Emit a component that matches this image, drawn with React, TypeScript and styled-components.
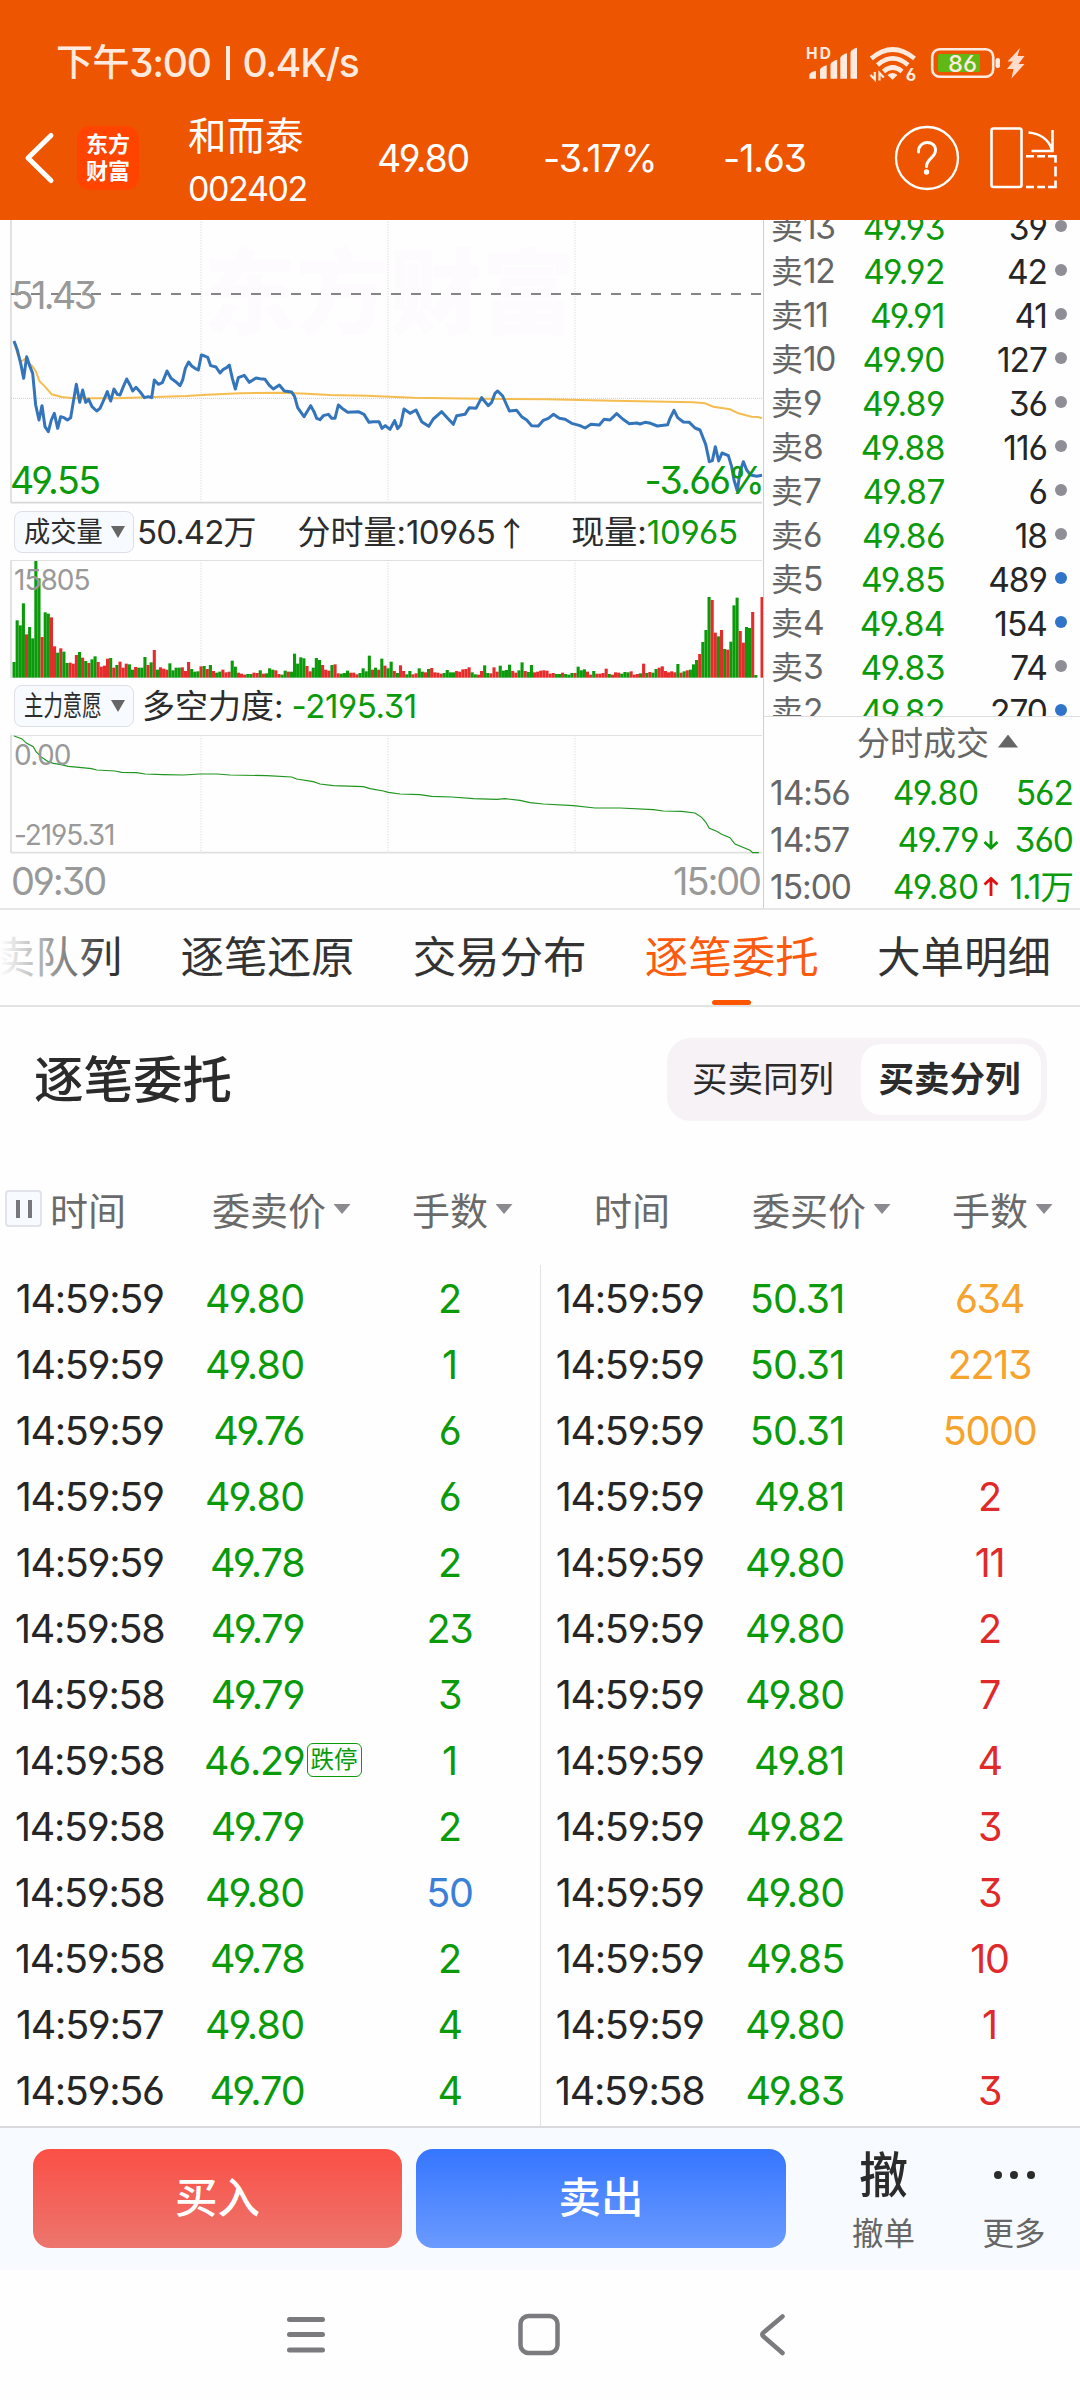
import React from "react";
import styled, { createGlobalStyle } from "styled-components";

const GREEN = "#0a9a0a";
const RED = "#e02a2a";
const ORANGE = "#f5a32c";
const BLUE = "#3a80d8";

const Global = createGlobalStyle`
  * { box-sizing: border-box; }
  body {
    margin: 0;
    background: #fefefe;
    font-family: Inter, "Noto Sans CJK SC", sans-serif;
    font-feature-settings: "cv03", "cv04", "cv09";
    color: #262626;
  }
`;

const Screen = styled.div`
  width: 1080px;
  height: 2400px;
  display: flex;
  flex-direction: column;
  overflow: hidden;
  white-space: nowrap;
  background: #fefefe;
`;

/* ---------- status bar and title bar ---------- */
const Header = styled.header`
  height: 220px;
  flex: none;
  background: #ee5500;
  color: #fff;
`;
const StatusBar = styled.div`
  height: 98px;
  padding: 28px 54px 0 56px;
  display: flex;
  justify-content: space-between;
  align-items: center;
  color: #ffeadf;
`;
const Clock = styled.div`
  display: flex;
  align-items: center;
  font-size: 39px;
  font-weight: 500;
  line-height: 70px;
  letter-spacing: -1.3px;
`;
const ClockPrefix = styled.span`
  font-size: 37px;
  letter-spacing: -0.5px;
`;
const ClockBar = styled.i`
  width: 4px;
  height: 34px;
  margin: 0 13px 0 15px;
  background: #ffeadf;
`;
const TitleBar = styled.div`
  height: 120px;
  display: flex;
  align-items: center;
  line-height: 1;
`;
const BackSlot = styled.div`
  width: 77px;
  padding-left: 23px;
  display: flex;
`;
const Logo = styled.div`
  width: 62px;
  height: 64px;
  border-radius: 13px;
  background: #ff4400;
  display: flex;
  flex-direction: column;
  align-items: center;
  justify-content: center;
  font-size: 22px;
  line-height: 27.5px;
  font-weight: 700;
`;
const StockName = styled.div`
  width: 238px;
  padding: 10px 0 0 49px;
  display: flex;
  flex-direction: column;
`;
const NameText = styled.div`
  font-size: 38.5px;
  line-height: 52px;
`;
const CodeText = styled.div`
  font-size: 34px;
  line-height: 54px;
  letter-spacing: -1.4px;
`;
const Quote = styled.div<{ $w: number }>`
  width: ${(p) => p.$w}px;
  padding-top: 2px;
  font-size: 37.5px;
  letter-spacing: -1.1px;
`;
const HeaderIcons = styled.div`
  display: flex;
  align-items: center;
  gap: 29px;
`;

/* ---------- market panel ---------- */
const Market = styled.section`
  height: 690px;
  flex: none;
  display: flex;
  border-bottom: 2px solid #e6e6e6;
`;
const Charts = styled.div`
  width: 763px;
  display: flex;
  flex-direction: column;
`;
const ChartBox = styled.div<{ $h: number }>`
  position: relative;
  height: ${(p) => p.$h}px;
  svg { display: block; position: relative; }
`;
const ChartLabel = styled.div<{ $x: number; $y: number; $size: number; $ls?: number; $green?: boolean; $right?: boolean }>`
  position: absolute;
  top: ${(p) => p.$y}px;
  ${(p) => (p.$right ? `right: ${p.$x}px;` : `left: ${p.$x}px;`)}
  font-size: ${(p) => p.$size}px;
  line-height: 1;
  letter-spacing: ${(p) => p.$ls ?? -1.2}px;
  color: ${(p) => (p.$green ? GREEN : "#999")};
`;
const Watermark = styled.div`
  position: absolute;
  left: 203px;
  top: 27px;
  font-size: 93px;
  line-height: 93px;
  font-weight: 900;
  color: #fefbfe;
`;
const IndicatorRow = styled.div<{ $h: number; $top: number }>`
  height: ${(p) => p.$h}px;
  padding: ${(p) => p.$top}px 0 0 14px;
  display: flex;
  align-items: flex-start;
  font-size: 33px;
  line-height: 42px;
  color: #2c2c2c;
`;
const Picker = styled.div`
  width: 120px;
  height: 42px;
  flex: none;
  padding: 0 8px 0 9px;
  display: flex;
  align-items: center;
  justify-content: space-between;
  border: 1px solid #dcdfe6;
  border-radius: 8px;
  background: #f7faff;
`;
const PickerText = styled.div<{ $size: number; $scale: number }>`
  width: 78px;
  font-size: ${(p) => p.$size}px;
  line-height: 40px;
  transform: scaleX(${(p) => p.$scale});
  transform-origin: left center;
`;
const Tri = styled.i<{ $w: number; $h: number; $color: string; $up?: boolean }>`
  display: block;
  flex: none;
  width: ${(p) => p.$w}px;
  height: ${(p) => p.$h}px;
  background: ${(p) => p.$color};
  clip-path: ${(p) => (p.$up ? "polygon(50% 0, 100% 100%, 0 100%)" : "polygon(0 0, 100% 0, 50% 100%)")};
`;
const Stat = styled.div<{ $ml: number; $ls?: number; $green?: boolean }>`
  margin-left: ${(p) => p.$ml}px;
  display: flex;
  letter-spacing: ${(p) => p.$ls ?? -0.9}px;
  color: ${(p) => (p.$green ? GREEN : "inherit")};
`;
const Cjk = styled.span`
  letter-spacing: 0;
`;
const UpArrow = styled.span`
  font-family: "Noto Sans CJK SC", sans-serif;
  letter-spacing: 0;
`;
const AxisRow = styled.div`
  flex: 1;
  padding: 5px 3px 0 11px;
  display: flex;
  justify-content: space-between;
  font-size: 38px;
  line-height: 44px;
  letter-spacing: -2.1px;
  color: #999;
`;

const Book = styled.aside`
  width: 317px;
  border-left: 1px solid #cfcfcf;
  display: flex;
  flex-direction: column;
`;
const AskList = styled.div`
  height: 497px;
  flex: none;
  overflow: hidden;
  border-bottom: 1px solid #dedede;
  display: flex;
  flex-direction: column;
`;
const AskInner = styled.div`
  margin-top: -15px;
`;
const AskRow = styled.div`
  height: 44px;
  padding-left: 7px;
  display: grid;
  grid-template-columns: 79px 95px 102px 28.5px;
  align-items: center;
  font-size: 33.5px;
  line-height: 44px;
  letter-spacing: -1.4px;
`;
const AskLabel = styled.div`
  color: #666;
  span { font-size: 32px; letter-spacing: 0; }
`;
const RightCell = styled.div<{ $green?: boolean; $ls?: number }>`
  text-align: right;
  color: ${(p) => (p.$green ? GREEN : "#262626")};
  ${(p) => (p.$ls !== undefined ? `letter-spacing: ${p.$ls}px;` : "")}
`;
const Dot = styled.i<{ $blue?: boolean }>`
  display: block;
  justify-self: center;
  width: 12px;
  height: 12px;
  margin-top: -4px;
  border-radius: 50%;
  background: ${(p) => (p.$blue ? "#2f74c8" : "#8f8d95")};
`;
const TradesTitle = styled.div`
  height: 53px;
  flex: none;
  padding-left: 93px;
  display: flex;
  align-items: center;
  gap: 9px;
  font-size: 33px;
  line-height: 53px;
  color: #666;
`;
const TitleTri = styled(Tri)`
  margin-top: -5px;
`;
const TradeRow = styled.div`
  height: 46.8px;
  flex: none;
  padding-left: 6px;
  display: grid;
  grid-template-columns: 96px 113px 20px 74px;
  align-items: center;
  font-size: 33.5px;
  letter-spacing: -1px;
  line-height: 46px;
`;
const TradeTime = styled.div`
  color: #666;
`;

/* ---------- tabs ---------- */
const Tabs = styled.nav`
  position: relative;
  height: 97px;
  flex: none;
  display: flex;
  justify-content: flex-end;
  gap: 58.2px;
  padding-right: 29px;
  border-bottom: 2px solid #e3e3e3;
`;
const Tab = styled.div<{ $active?: boolean }>`
  display: flex;
  flex-direction: column;
  align-items: center;
  padding-top: 4px;
  font-size: 43.5px;
  line-height: 86px;
  color: ${(p) => (p.$active ? "#fc5a0c" : "#333")};
  &::after {
    content: "";
    width: 39px;
    height: 6px;
    border-radius: 3px;
    background: ${(p) => (p.$active ? "#ff5500" : "transparent")};
  }
`;
const TabFade = styled.div`
  position: absolute;
  left: 0;
  top: 10px;
  width: 110px;
  height: 76px;
  background: linear-gradient(90deg, #fefefe 0%, rgba(254, 254, 254, 0) 100%);
`;

/* ---------- order list ---------- */
const SectionHead = styled.div`
  height: 145px;
  flex: none;
  padding: 0 33px 0 34px;
  display: flex;
  align-items: center;
  justify-content: space-between;
`;
const SectionTitle = styled.h2`
  margin: 0;
  font-size: 49.5px;
  line-height: 60px;
  font-weight: 500;
  color: #2b2b2b;
`;
const Segmented = styled.div`
  width: 380px;
  height: 83px;
  padding: 6px;
  display: flex;
  border-radius: 24px;
  background: #f6f2f6;
`;
const Segment = styled.div<{ $on?: boolean }>`
  width: ${(p) => (p.$on ? 180 : 188)}px;
  padding-right: ${(p) => (p.$on ? 3 : 8)}px;
  display: flex;
  align-items: center;
  justify-content: center;
  font-size: 35.5px;
  line-height: 70px;
  border-radius: 20px;
  color: #2b2b2b;
  background: ${(p) => (p.$on ? "#fefefe" : "transparent")};
  font-weight: ${(p) => (p.$on ? 600 : 400)};
`;
const Columns = styled.div`
  height: 113px;
  flex: none;
  padding-top: 4px;
  display: grid;
  grid-template-columns: 1fr 1fr;
`;
const ColumnSet = styled.div`
  display: grid;
  grid-template-columns: 50px 162px 200px 1fr;
  align-items: center;
  font-size: 38px;
  line-height: 50px;
  color: #6a6a6a;
`;
const ColName = styled.div<{ $shift?: number }>`
  padding-left: ${(p) => p.$shift ?? 0}px;
  display: flex;
  align-items: center;
  gap: 7.5px;
`;
const PauseBox = styled.div`
  width: 37px;
  height: 37px;
  margin: 0 0 4px 5px;
  display: flex;
  align-items: center;
  justify-content: center;
  gap: 8px;
  border: 2px solid #e0e3ea;
  border-radius: 4px;
  background: #f7faff;
  i { width: 4px; height: 18px; background: #77777c; }
`;
const SortMark = styled(Tri)`
  margin-top: -3px;
`;
const Orders = styled.div`
  height: 861px;
  flex: none;
  display: grid;
  grid-template-columns: 1fr 1fr;
`;
const OrderSide = styled.div<{ $second?: boolean }>`
  padding-top: 1px;
  box-shadow: ${(p) => (p.$second ? "inset 1px 0 #e3e3e3" : "none")};
`;
const OrderRow = styled.div`
  height: 66px;
  display: grid;
  grid-template-columns: 179.5px 125px 58px 174px;
  align-items: center;
  font-size: 39.5px;
  line-height: 66px;
  letter-spacing: -1.3px;
`;
const TimeCell = styled.div`
  text-align: center;
`;
const LimitTag = styled.span`
  width: 55px;
  height: 34px;
  margin: 0 0 2px 2px;
  display: flex;
  align-items: center;
  justify-content: center;
  border: 1px solid ${GREEN};
  border-radius: 6px;
  font-size: 23.5px;
  line-height: 30px;
  letter-spacing: 0;
  color: ${GREEN};
`;
const QtyCell = styled.div<{ $color: string }>`
  text-align: center;
  color: ${(p) => p.$color};
`;

/* ---------- bottom bars ---------- */
const ActionBar = styled.div`
  height: 144px;
  flex: none;
  padding: 21px 0 0 33px;
  display: flex;
  align-items: flex-start;
  border-top: 2px solid #d8dade;
  background: #f7faff;
`;
const TradeButton = styled.button<{ $sell?: boolean }>`
  width: ${(p) => (p.$sell ? 370 : 369)}px;
  height: 99px;
  margin: 0 14px 0 0;
  padding: 0 0 1px;
  border: 0;
  border-radius: 17px;
  font: 500 42.5px/60px Inter, "Noto Sans CJK SC", sans-serif;
  color: #fff;
  background: ${(p) =>
    p.$sell ? "linear-gradient(#3576ff, #6b9aff)" : "linear-gradient(#fb5046, #ec756d)"};
`;
const Tool = styled.div<{ $ml: number }>`
  width: 100px;
  margin-left: ${(p) => p.$ml}px;
  display: flex;
  flex-direction: column;
  align-items: center;
  color: #2b2b2b;
`;
const ToolIcon = styled.div`
  height: 54px;
  display: flex;
  align-items: center;
  gap: 8.5px;
  font-size: 49px;
  line-height: 48px;
  font-weight: 500;
  i { width: 8px; height: 8px; margin-top: -3px; border-radius: 50%; background: #2b2b2b; }
`;
const ToolLabel = styled.div`
  font-size: 31.5px;
  line-height: 62px;
  color: #666;
`;
const NavBar = styled.div`
  height: 130px;
  flex: none;
  padding: 40px 294px 0 283px;
  display: flex;
  align-items: flex-start;
`;
const NavItem = styled.div<{ $w: number }>`
  width: ${(p) => p.$w}px;
`;

/* ---------- data ---------- */
const PRICE_LINE =
  "42,378 52,405 62,445 71,490 80,425 90,455 98,475 107,570 117,615 126,572 135,635 145,650 154,615 163,595 173,640 182,605 192,608 202,615 212,608 220,560 229,508 239,562 248,525 257,562 266,553 276,575 290,588 300,580 310,558 322,530 332,558 342,522 352,538 360,540 370,515 380,492 390,510 398,528 408,517 420,530 433,548 445,545 455,548 463,495 475,508 487,503 501,468 513,490 527,500 540,512 548,495 556,460 566,441 575,453 585,460 595,465 604,420 614,423 623,427 632,452 648,456 660,474 670,463 680,458 688,450 697,490 706,522 715,488 733,481 748,502 768,489 780,491 795,493 808,511 820,522 838,510 853,528 875,531 884,545 893,578 912,605 932,572 942,590 950,610 960,614 970,602 985,598 995,610 1005,610 1015,570 1030,583 1043,592 1075,590 1092,598 1107,622 1120,620 1137,620 1146,640 1156,632 1170,643 1184,617 1193,641 1202,630 1212,582 1230,595 1248,585 1265,620 1286,634 1300,612 1325,590 1343,610 1360,628 1370,602 1395,598 1408,578 1428,580 1445,548 1465,572 1475,562 1485,535 1493,528 1508,543 1520,570 1528,588 1550,586 1565,605 1580,615 1595,632 1615,633 1630,616 1645,610 1660,598 1678,610 1695,613 1715,625 1740,632 1755,639 1773,628 1798,630 1812,613 1830,615 1850,596 1868,612 1888,626 1910,624 1920,627 1935,622 1952,625 1972,633 2003,629 2010,610 2022,586 2033,608 2050,621 2068,622 2085,639 2100,645 2117,688 2128,740 2137,737 2146,695 2156,738 2166,714 2185,722 2195,755 2202,795 2212,828 2220,770 2230,740 2240,765 2252,780 2270,784 2286,781";
const AVG_LINE =
  "42,380 52,415 62,440 75,432 98,455 108,470 118,498 135,515 155,538 185,546 220,550 280,550 350,550 440,547 560,543 620,539 720,535 850,533 920,536 990,540 1100,542 1240,548 1440,551 1640,553 1840,557 2000,560 2080,562 2115,565 2140,575 2190,583 2215,595 2255,605 2275,606 2286,610";
const FORCE_LINE =
  "42,708 65,716 80,730 100,740 108,755 125,772 145,785 160,790 180,793 205,799 245,803 275,806 290,810 345,813 365,817 410,818 435,822 490,824 550,825 600,822 650,822 690,825 800,827 875,831 890,837 940,845 960,852 1000,857 1090,860 1110,866 1150,873 1165,877 1200,882 1260,884 1295,889 1355,891 1420,896 1490,898 1515,896 1560,901 1590,908 1630,912 1720,917 1785,924 1860,924 1960,929 1990,933 2045,934 2085,939 2105,952 2117,966 2128,985 2150,994 2165,1003 2190,1013 2205,1032 2250,1051 2258,1058 2277,1058";
const VOLUME =
  "g47 g172 g157 g223 r130 g152 g118 g350 g298 r122 g196 g192 r181 r94 g75 r88 g78 g44 r45 r42 r68 g77 r60 g50 r44 g55 g64 r47 r33 r36 r57 g59 r30 g38 r48 r30 r42 g40 g24 r32 g30 g30 g62 r38 g46 r83 g24 r31 r27 r24 g43 g22 g30 g30 r31 r20 r47 g26 g18 g19 r34 g35 r26 g38 r20 g15 g18 r24 r16 r18 g51 g33 r15 r12 r9 g11 g11 r15 r14 g22 r12 g13 g28 g24 r22 r11 g9 g21 r18 g18 g72 g42 g61 g58 r35 r19 g30 g59 g53 r38 r24 r21 g38 r40 r13 g12 g14 g21 r15 r15 r10 g14 g28 g19 g66 r24 g30 r24 g57 r36 g28 g48 r20 g14 r37 r20 g10 g20 r10 r13 g28 g18 r16 g26 r29 r16 r15 r12 g14 g23 g16 g16 r20 r18 r25 r26 r31 g16 g10 r9 r20 g37 g14 r13 r31 r18 g36 g21 g23 g39 r20 r15 g22 g46 r20 g17 g38 r16 r18 r21 r22 r21 r12 r14 g11 g11 r15 g11 g9 g14 r14 g33 g22 g25 r18 r9 g20 r12 r12 r14 r27 g11 r9 r16 r15 g12 g17 g16 r19 r9 r11 g13 r42 g14 r17 g15 g26 r30 r34 r20 r16 r19 r16 g41 r15 g19 r22 g24 g40 g53 r71 g107 g143 g242 r233 r135 g124 r143 g86 r84 g108 g217 g240 r140 r105 g152 g149 r197 g8 g0 r242".split(" ");

const ASKS: [number, string, string, boolean][] = [
  [13, "49.93", "39", false],
  [12, "49.92", "42", false],
  [11, "49.91", "41", false],
  [10, "49.90", "127", false],
  [9, "49.89", "36", false],
  [8, "49.88", "116", false],
  [7, "49.87", "6", false],
  [6, "49.86", "18", false],
  [5, "49.85", "489", true],
  [4, "49.84", "154", true],
  [3, "49.83", "74", false],
  [2, "49.82", "270", true],
];

type Order = [string, string, string, string?];
const SELLS: Order[] = [
  ["14:59:59", "49.80", "2"],
  ["14:59:59", "49.80", "1"],
  ["14:59:59", "49.76", "6"],
  ["14:59:59", "49.80", "6"],
  ["14:59:59", "49.78", "2"],
  ["14:59:58", "49.79", "23"],
  ["14:59:58", "49.79", "3"],
  ["14:59:58", "46.29", "1", "跌停"],
  ["14:59:58", "49.79", "2"],
  ["14:59:58", "49.80", "50"],
  ["14:59:58", "49.78", "2"],
  ["14:59:57", "49.80", "4"],
  ["14:59:56", "49.70", "4"],
];
const BUYS: Order[] = [
  ["14:59:59", "50.31", "634"],
  ["14:59:59", "50.31", "2213"],
  ["14:59:59", "50.31", "5000"],
  ["14:59:59", "49.81", "2"],
  ["14:59:59", "49.80", "11"],
  ["14:59:59", "49.80", "2"],
  ["14:59:59", "49.80", "7"],
  ["14:59:59", "49.81", "4"],
  ["14:59:59", "49.82", "3"],
  ["14:59:59", "49.80", "3"],
  ["14:59:59", "49.85", "10"],
  ["14:59:59", "49.80", "1"],
  ["14:59:58", "49.83", "3"],
];
const qtyColor = (q: string, base: string) => (Number(q) >= 500 ? ORANGE : Number(q) >= 50 ? BLUE : base);
/* Prices with an 8 or a leading 5 run wider than those with a 7 or a 6. */
const priceSpacing = (p: string) => (p[0] === "5" ? -0.8 : p[3] === "8" ? -0.7 : p[3] === "7" ? -1.1 : -1.3);

/* ---------- drawings ---------- */
const StatusIcons = () => (
  <svg width="220" height="36" viewBox="806 45 220 36" fill="#ffeadf" overflow="visible">
    <text x="806" y="59.300" fontSize="15.500" fontWeight="700" fontFamily="Inter" textLength="25">HD</text>
    <path d="M809.300 78.700v-4q1-3 6.700-4v8zM820 78.700v-9q1-3 6.700-4.500v13.500zM830.500 78.700v-14.500q1-3 6.700-4.500v19zM840.300 78.700v-21q1-3 6.700-4.500v25.500zM850.500 78.700v-26.500q1-3 6.500-4.500v31z" />
    <g fill="none" stroke="#ffeadf" strokeWidth="4.600">
      <path d="M871.300 58.500Q892.700 40.500 914.500 58.500" />
      <path d="M877.500 65Q892.700 51.800 908 65" />
      <path d="M883.500 71.500Q892.700 63.500 902 71.500" />
    </g>
    <path d="M887.500 75q5-4 10 0l-5 4.800z" />
    <path d="M874.800 72v7.500l-4.300-4.500M879.500 80.500v-7.500l4.300 4.500" fill="none" stroke="#ffeadf" strokeWidth="2.200" />
    <text x="905.800" y="81" fontSize="17" fontWeight="700" fontFamily="Inter">6</text>
    <rect x="932.200" y="49.200" width="61" height="27.600" rx="7.500" fill="none" stroke="#ffeadf" strokeWidth="2.600" />
    <rect x="938" y="54" width="42" height="18" rx="2" fill="#5fb814" />
    <text x="948" y="71.800" fontSize="23.500" fontWeight="500" fontFamily="Inter" textLength="29" lengthAdjust="spacingAndGlyphs">86</text>
    <rect x="995.500" y="58" width="4.500" height="10" rx="2" />
    <path d="M1020 48l-12.500 13.500h5.500l-6 7.500h6.500l-2 9.500 13-14.500h-6l6-8h-7z" fill="#ffdccb" />
  </svg>
);

const HelpIcon = () => (
  <svg width="66" height="66" viewBox="0 0 66 66" fill="none" stroke="#fff" strokeWidth="2.300">
    <circle cx="33" cy="33" r="31" />
    <path d="M24.500 27c-0.500-12.500 17.500-12.500 17-1.500-0.400 7.500-9 8-9 16" strokeWidth="3" strokeLinecap="round" />
    <circle cx="32.500" cy="47" r="2.700" fill="#fff" stroke="none" />
  </svg>
);

const RotateIcon = () => (
  <svg width="68" height="64" viewBox="989 126 68 64" fill="none" stroke="#fff" strokeWidth="2.600">
    <rect x="991.500" y="128.500" width="30" height="58.500" rx="2" />
    <path d="M1028.500 132.500c11 1 20 7 23.500 17M1052.500 130v21.500M1031.500 151h22.200" />
    <path d="M1026 156.300h8M1037 156.300h8M1048 156.300h7.500v6.500M1055.500 166.500v10M1055.500 180.500v6.500h-7.500M1045 187h-8M1034 187h-8" />
  </svg>
);

const Grid = ({ top, bottom }: { top: number; bottom: number }) => (
  <g stroke="#d4d4d4" strokeWidth="3" strokeDasharray="3 5">
    {[603, 1164, 1725].map((x) => (
      <line key={x} x1={x} x2={x} y1={top} y2={bottom} />
    ))}
  </g>
);

const OrderColumn = ({ rows, base, second }: { rows: Order[]; base: string; second?: boolean }) => (
  <OrderSide $second={second}>
    {rows.map(([time, price, qty, tag], i) => (
      <OrderRow key={i}>
        <TimeCell>{time}</TimeCell>
        <RightCell $green $ls={priceSpacing(price)}>{price}</RightCell>
        <div>{tag && <LimitTag>{tag}</LimitTag>}</div>
        <QtyCell $color={qtyColor(qty, base)}>{qty}</QtyCell>
      </OrderRow>
    ))}
  </OrderSide>
);

const Sort = () => <SortMark $w={17} $h={10} $color="#8c8a90" />;

export default function App() {
  return (
    <Screen>
      <Global />
      <Header>
        <StatusBar>
          <Clock><ClockPrefix>下午</ClockPrefix>3:00<ClockBar />0.4K/s</Clock>
          <StatusIcons />
        </StatusBar>
        <TitleBar>
          <BackSlot>
            <svg width="34" height="54" viewBox="0 0 34 54" fill="none" stroke="#fff" strokeWidth="5" strokeLinecap="round" strokeLinejoin="round">
              <path d="M28 4.500L5 27l23 22.500" />
            </svg>
          </BackSlot>
          <Logo><div>东方</div><div>财富</div></Logo>
          <StockName>
            <NameText>和而泰</NameText>
            <CodeText>002402</CodeText>
          </StockName>
          <Quote $w={166}>49.80</Quote>
          <Quote $w={180}>-3.17%</Quote>
          <Quote $w={171}>-1.63</Quote>
          <HeaderIcons>
            <HelpIcon />
            <RotateIcon />
          </HeaderIcons>
        </TitleBar>
      </Header>

      <Market>
        <Charts>
          <ChartBox $h={284}>
            <Watermark>东方财富</Watermark>
            <svg width="763" height="284" viewBox="0 15 2289 852">
              <Grid top={20} bottom={862} />
              <path d="M33 15V863" stroke="#e2e2e2" strokeWidth="6" />
              <path d="M33 863H2286" stroke="#d8d8d8" strokeWidth="5" />
              <path d="M33 550H2286" stroke="#cccccc" strokeWidth="3" strokeDasharray="3 3" />
              <path d="M33 237H2286" stroke="#858585" strokeWidth="6" strokeDasharray="30 30" />
              <polyline points={AVG_LINE} fill="none" stroke="#f5bd4f" strokeWidth="6" />
              <polyline points={PRICE_LINE} fill="none" stroke="#3474bb" strokeWidth="9" strokeLinejoin="round" />
            </svg>
            <ChartLabel $x={11} $y={57} $size={37.5} $ls={-2.6}>51.43</ChartLabel>
            <ChartLabel $x={10} $y={242} $size={37.5} $ls={-1.4} $green>49.55</ChartLabel>
            <ChartLabel $x={0} $y={242} $size={37.5} $ls={-1.8} $green $right>-3.66%</ChartLabel>
          </ChartBox>
          <IndicatorRow $h={56} $top={7}>
            <Picker>
              <PickerText $size={28.5} $scale={0.92}>成交量</PickerText>
              <Tri $w={14} $h={12} $color="#666" />
            </Picker>
            <Stat $ml={3}>50.42<Cjk>万</Cjk></Stat>
            <Stat $ml={41} $ls={-0.6}><Cjk>分时量:</Cjk>10965<UpArrow>↑</UpArrow></Stat>
            <Stat $ml={43}><Cjk>现量:</Cjk></Stat>
            <Stat $ml={0} $ls={-0.2} $green>10965</Stat>
          </IndicatorRow>
          <ChartBox $h={118}>
            <svg width="763" height="118" viewBox="0 180 2289 354">
              <Grid top={181} bottom={534} />
              <path d="M33 181.500H2286" stroke="#e0e0e0" strokeWidth="3" />
              <path d="M33 180V534" stroke="#e2e2e2" strokeWidth="6" />
              {VOLUME.map((v, i) => {
                const h = Number(v.slice(1));
                return (
                  <rect key={i} x={37.5 + i * 9.35} y={533 - h} width={9.3} height={h} fill={v[0] === "g" ? GREEN : "#e52b2b"} />
                );
              })}
            </svg>
            <ChartLabel $x={14} $y={6} $size={28} $ls={-1}>15805</ChartLabel>
          </ChartBox>
          <IndicatorRow $h={57} $top={7}>
            <Picker>
              <PickerText $size={28.5} $scale={0.68}>主力意愿</PickerText>
              <Tri $w={14} $h={12} $color="#666" />
            </Picker>
            <Stat $ml={8}><Cjk>多空力度:</Cjk></Stat>
            <Stat $ml={8} $ls={-0.4} $green>-2195.31</Stat>
          </IndicatorRow>
          <ChartBox $h={119}>
            <svg width="763" height="119" viewBox="0 705 2289 357">
              <Grid top={706} bottom={1057} />
              <path d="M33 706.500H2286" stroke="#e0e0e0" strokeWidth="3" />
              <path d="M33 705V1058" stroke="#e2e2e2" strokeWidth="6" />
              <path d="M33 1058H2286" stroke="#e0e0e0" strokeWidth="5" />
              <polyline points={FORCE_LINE} fill="none" stroke="#1f951f" strokeWidth="3.500" />
            </svg>
            <ChartLabel $x={14} $y={6} $size={28} $ls={-0.7}>0.00</ChartLabel>
            <ChartLabel $x={14} $y={86} $size={28} $ls={-1.1}>-2195.31</ChartLabel>
          </ChartBox>
          <AxisRow><span>09:30</span><span>15:00</span></AxisRow>
        </Charts>

        <Book>
          <AskList>
            <AskInner>
              {ASKS.map(([n, price, qty, blue]) => (
                <AskRow key={n}>
                  <AskLabel><span>卖</span>{n}</AskLabel>
                  <RightCell $green $ls={-0.5}>{price}</RightCell>
                  <RightCell $ls={-1}>{qty}</RightCell>
                  <Dot $blue={blue} />
                </AskRow>
              ))}
            </AskInner>
          </AskList>
          <TradesTitle>分时成交<TitleTri $w={20} $h={13} $color="#666" $up /></TradesTitle>
          <TradeRow>
            <TradeTime>14:56</TradeTime><RightCell $green $ls={-0.2}>49.80</RightCell><i /><RightCell $green>562</RightCell>
          </TradeRow>
          <TradeRow>
            <TradeTime>14:57</TradeTime><RightCell $green $ls={-0.5}>49.79</RightCell>
            <svg width="20" height="24" viewBox="0 0 20 24" fill="none" stroke={GREEN} strokeWidth="2.800"><path d="M12 3v17M5.500 14l6.500 6 6.500-6" /></svg>
            <RightCell $green>360</RightCell>
          </TradeRow>
          <TradeRow>
            <TradeTime>15:00</TradeTime><RightCell $green $ls={-0.2}>49.80</RightCell>
            <svg width="20" height="24" viewBox="0 0 20 24" fill="none" stroke="#e01010" strokeWidth="2.800"><path d="M12 21V3.500M5.500 9.500l6.500-6 6.500 6" /></svg>
            <RightCell $green>1.1万</RightCell>
          </TradeRow>
        </Book>
      </Market>

      <Tabs>
        <Tab>卖队列</Tab>
        <Tab>逐笔还原</Tab>
        <Tab>交易分布</Tab>
        <Tab $active>逐笔委托</Tab>
        <Tab>大单明细</Tab>
        <TabFade />
      </Tabs>

      <SectionHead>
        <SectionTitle>逐笔委托</SectionTitle>
        <Segmented>
          <Segment>买卖同列</Segment>
          <Segment $on>买卖分列</Segment>
        </Segmented>
      </SectionHead>

      <Columns>
        <ColumnSet>
          <PauseBox><i /><i /></PauseBox>
          <ColName>时间</ColName>
          <ColName>委卖价<Sort /></ColName>
          <ColName>手数<Sort /></ColName>
        </ColumnSet>
        <ColumnSet>
          <i />
          <ColName $shift={4}>时间</ColName>
          <ColName>委买价<Sort /></ColName>
          <ColName>手数<Sort /></ColName>
        </ColumnSet>
      </Columns>

      <Orders>
        <OrderColumn rows={SELLS} base={GREEN} />
        <OrderColumn rows={BUYS} base={RED} second />
      </Orders>

      <ActionBar>
        <TradeButton>买入</TradeButton>
        <TradeButton $sell>卖出</TradeButton>
        <Tool $ml={33.5}>
          <ToolIcon>撤</ToolIcon>
          <ToolLabel>撤单</ToolLabel>
        </Tool>
        <Tool $ml={30.5}>
          <ToolIcon><i /><i /><i /></ToolIcon>
          <ToolLabel>更多</ToolLabel>
        </Tool>
      </ActionBar>

      <NavBar>
        <NavItem $w={234}>
          <svg width="46" height="50" viewBox="0 0 46 50" stroke="#7b7b7f" strokeWidth="5" strokeLinecap="round">
            <path d="M6.500 9.500h33M6.500 24.500h33M6.500 40h33" />
          </svg>
        </NavItem>
        <NavItem $w={238}>
          <svg width="46" height="50" viewBox="0 0 46 50" fill="none" stroke="#7b7b7f" strokeWidth="4.500">
            <rect x="3.500" y="6" width="37" height="37" rx="8" />
          </svg>
        </NavItem>
        <NavItem $w={30}>
          <svg width="30" height="50" viewBox="0 0 30 50" fill="none" stroke="#7b7b7f" strokeWidth="4.500" strokeLinecap="round" strokeLinejoin="round">
            <path d="M27.500 6.500L8.500 22.500Q6 24.500 8.500 26.500L27.500 43" />
          </svg>
        </NavItem>
      </NavBar>
    </Screen>
  );
}
